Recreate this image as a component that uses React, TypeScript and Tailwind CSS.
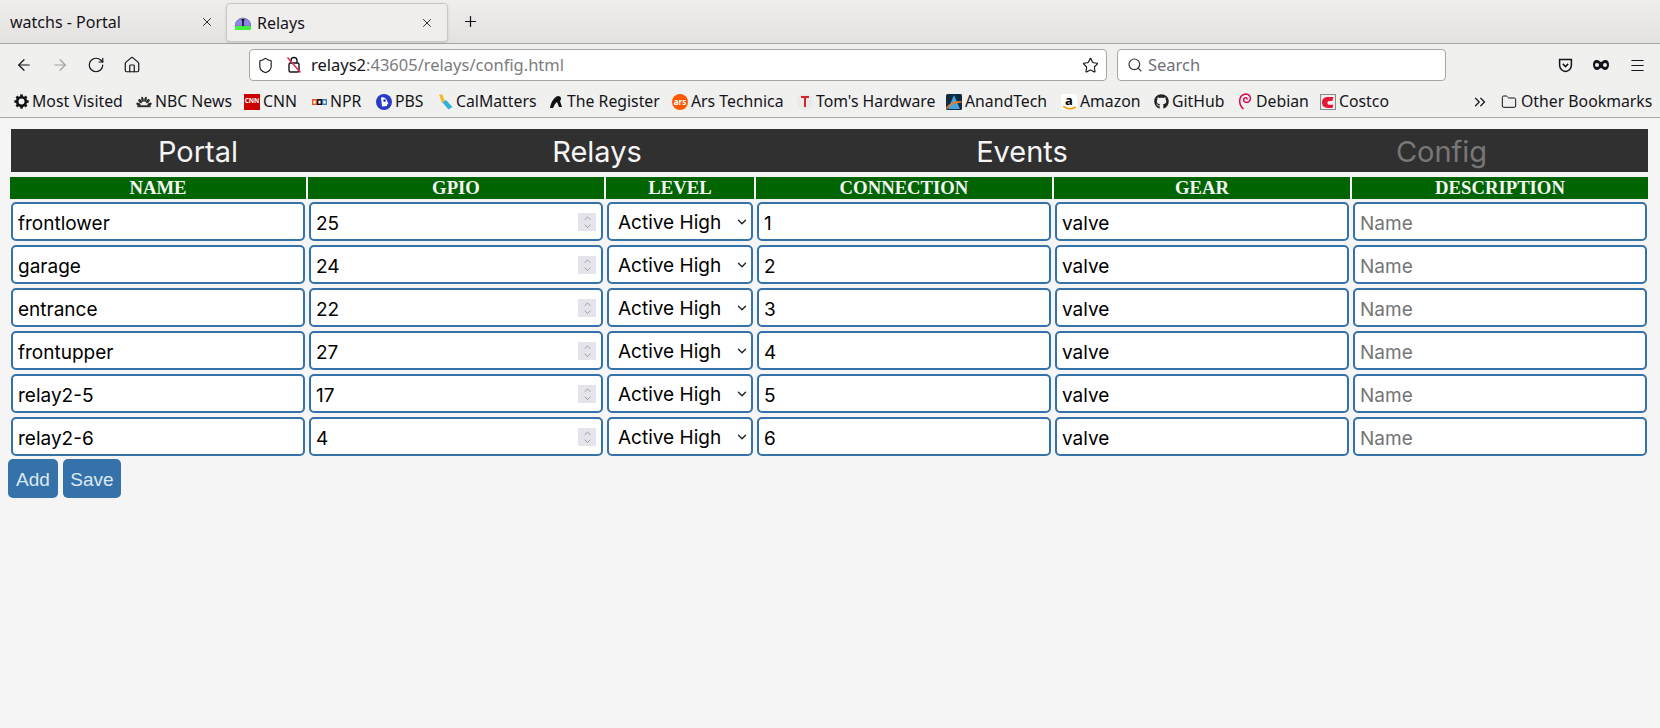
import React from 'react';
import { ArrowLeft, ArrowRight, RotateCw, Home, Shield, Star, Search, X, Plus, Menu, Folder, ChevronsRight, ChevronDown, ChevronUp } from 'lucide-react';
import { FaGithub } from 'react-icons/fa';

const relays = [
  { name: 'frontlower', gpio: '25', conn: '1' },
  { name: 'garage', gpio: '24', conn: '2' },
  { name: 'entrance', gpio: '22', conn: '3' },
  { name: 'frontupper', gpio: '27', conn: '4' },
  { name: 'relay2-5', gpio: '17', conn: '5' },
  { name: 'relay2-6', gpio: '4', conn: '6' },
];

const headers = ['NAME', 'GPIO', 'LEVEL', 'CONNECTION', 'GEAR', 'DESCRIPTION'];

const RelayFavicon = () => (
  <svg width="16" height="16" viewBox="0 0 16 16">
    <path d="M0 11 A8 8 0 0 1 16 11 Z" fill="#8a86ee" stroke="#555" strokeWidth="0.5" />
    <rect y="11" width="16" height="4" fill="#44ee44" />
    <path d="M6.5 4 H9.5 V5.5 H8.8 V11 H7.2 V5.5 H6.5 Z" fill="#111" />
  </svg>
);

const gearTeeth = [0, 45, 90, 135, 180, 225, 270, 315];

const bookmarks: { name: string; icon: React.ReactNode; w: string }[] = [
  { name: 'Most Visited', w: 'w-[123px]', icon: (
    <svg width="15" height="15" viewBox="0 0 16 16">
      <circle cx="8" cy="8" r="4.6" fill="none" stroke="#111" strokeWidth="2.8" />
      {gearTeeth.map((a) => (
        <rect key={a} x="6.6" y="0.4" width="2.8" height="3" fill="#111" transform={`rotate(${a} 8 8)`} />
      ))}
    </svg>
  ) },
  { name: 'NBC News', w: 'w-[108px]', icon: (
    <svg width="17" height="12" viewBox="0 0 17 12" fill="#2a2a2a">
      <ellipse cx="2.6" cy="8.4" rx="2.4" ry="1.5" transform="rotate(25 2.6 8.4)" />
      <ellipse cx="4.4" cy="5" rx="1.5" ry="2.6" transform="rotate(-40 4.4 5)" />
      <ellipse cx="6.9" cy="3.2" rx="1.3" ry="2.9" transform="rotate(-14 6.9 3.2)" />
      <ellipse cx="10.1" cy="3.2" rx="1.3" ry="2.9" transform="rotate(14 10.1 3.2)" />
      <ellipse cx="12.6" cy="5" rx="1.5" ry="2.6" transform="rotate(40 12.6 5)" />
      <ellipse cx="14.4" cy="8.4" rx="2.4" ry="1.5" transform="rotate(-25 14.4 8.4)" />
      <rect x="1.5" y="9.5" width="14" height="2" />
    </svg>
  ) },
  { name: 'CNN', w: 'w-[67px]', icon: (
    <div className="w-[16px] h-[16px] bg-[#cc0000] text-white text-[6.5px] font-bold flex items-center justify-center leading-none">CNN</div>
  ) },
  { name: 'NPR', w: 'w-[65px]', icon: (
    <svg width="15" height="6" viewBox="0 0 15 6">
      <rect width="5" height="6" fill="#e8541f" />
      <rect x="5" width="5" height="6" fill="#111" />
      <rect x="10" width="5" height="6" fill="#3a7fc1" />
      <rect x="1.4" y="1.6" width="2.2" height="3" fill="#fff" />
      <rect x="6.4" y="1.6" width="2.2" height="3" fill="#fff" />
      <rect x="11.4" y="1.6" width="2.2" height="3" fill="#fff" />
    </svg>
  ) },
  { name: 'PBS', w: 'w-[61px]', icon: (
    <svg width="16" height="16" viewBox="0 0 16 16">
      <circle cx="8" cy="8" r="8" fill="#2a3bc8" />
      <path d="M5 3.5 A5 5 0 0 1 11.5 8 L12.5 10 L11 10.5 V12 L6 12.5 Z" fill="#fff" />
      <circle cx="8.6" cy="6.6" r="1.3" fill="#2a3bc8" />
    </svg>
  ) },
  { name: 'CalMatters', w: 'w-[111px]', icon: (
    <svg width="15" height="16" viewBox="0 0 15 16"><path d="M1 0.5 L4.5 0.5 L7 8 L4 9 Z" fill="#f4b82e" /><path d="M4.5 8.5 L8 6 L14.5 13 L10.5 15.5 Z" fill="#2fb3d6" /></svg>
  ) },
  { name: 'The Register', w: 'w-[124px]', icon: (
    <svg width="14" height="14" viewBox="0 0 14 14"><path d="M1 13 C2 7 5 2 9 1 C12 1 13 4 11 6 L13 12 L10 12 L8 7 L6 9 L4 13 Z" fill="#111" /></svg>
  ) },
  { name: 'Ars Technica', w: 'w-[125px]', icon: (
    <div className="w-[16px] h-[16px] rounded-full bg-[#ff5a00] text-white text-[8px] font-bold flex items-center justify-center leading-none">ars</div>
  ) },
  { name: "Tom's Hardware", w: 'w-[149px]', icon: (
    <div className="w-[16px] h-[16px] rounded-full bg-[#e9e9e9] flex items-center justify-center">
      <svg width="8" height="11" viewBox="0 0 8 11"><path d="M0 0 H8 V2 H5 V11 H3 V2 H0 Z" fill="#d6202a" /></svg>
    </div>
  ) },
  { name: 'AnandTech', w: 'w-[115px]', icon: (
    <svg width="16" height="16" viewBox="0 0 16 16"><rect width="16" height="16" rx="1.5" fill="#0d2c44" /><path d="M8 1 L14 15 H2 Z" fill="#4ba3d9" /><path d="M0.5 14.5 Q6 7 15.5 8" stroke="#ee7b22" strokeWidth="1.6" fill="none" /></svg>
  ) },
  { name: 'Amazon', w: 'w-[92px]', icon: (
    <div className="w-[16px] h-[16px] bg-white rounded-[2px] flex flex-col items-center leading-none">
      <span className="text-[13px] font-bold text-black leading-[12px]">a</span>
      <svg width="13" height="4" viewBox="0 0 13 4"><path d="M0 0 Q6 5 13 1" stroke="#f90" strokeWidth="1.6" fill="none" /></svg>
    </div>
  ) },
  { name: 'GitHub', w: 'w-[84px]', icon: <FaGithub size={15} className="text-[#222]" /> },
  { name: 'Debian', w: 'w-[83px]', icon: (
    <svg width="14" height="17" viewBox="0 0 14 17"><path d="M5.5 16 C0.5 12 0 3 6.5 1.2 C12 0.5 14 5.5 11 8.6 C8.5 10.5 5 9 5.8 6 C6.6 4 9.2 4.4 9.2 6.4" stroke="#d70751" strokeWidth="1.5" fill="none" /></svg>
  ) },
  { name: 'Costco', w: 'w-[70px]', icon: (
    <div className="w-[16px] h-[16px] bg-[#eeeeee] border border-[#888] flex items-center justify-center">
      <svg width="12" height="12" viewBox="0 0 11 11"><path d="M10.5 1 H5.5 C2 1 0 3 0 6 C0 9 2 11 5.5 11 H9.5 L10.5 8 H6.5 C4.5 8 4.5 4.5 6.5 4.5 H9.5 Z" fill="#e31837" /></svg>
    </div>
  ) },
];

const inputCls = "w-full h-[39px] bg-white border-2 border-[#3572a9] rounded-[5px] px-[5px] pt-[3px] text-[19px] text-black outline-none placeholder:text-[#757575] font-['Inter',sans-serif]";

const Spinner = () => (
  <div className="absolute right-[8px] top-[11px] w-[18px] h-[18px] bg-[#e4e4ea] flex flex-col items-center justify-center text-[#77777d]">
    <ChevronUp size={13} strokeWidth={1.5} className="-mb-[3px]" />
    <ChevronDown size={13} strokeWidth={1.5} />
  </div>
);

const LockCrossed = () => (
  <svg width="16" height="18" viewBox="0 0 16 18" fill="none" className="ml-[12px]">
    <path d="M5 7 V4.5 A3 3 0 0 1 11 4.5 V7" stroke="#15141a" strokeWidth="1.4" />
    <rect x="3" y="7" width="10" height="9" rx="1.5" stroke="#15141a" strokeWidth="1.4" />
    <path d="M1.5 1.5 L14.5 16.5" stroke="#e22850" strokeWidth="1.5" />
  </svg>
);

const App = () => {
  return (
    <div className="w-[1660px] h-[728px] flex flex-col overflow-hidden bg-[#f5f5f5] font-['Noto_Sans',sans-serif]">
      {/* Tab strip */}
      <div className="h-[44px] bg-gradient-to-b from-[#efeeec] to-[#e3e2e0] border-b border-[#a8a6a2] flex items-start">
        <div className="w-[226px] h-[43px] pl-[10px] pr-[12px] flex items-center justify-between text-[16px] text-[#15141a]">
          <span>watchs - Portal</span>
          <X size={14} strokeWidth={1.5} />
        </div>
        <div className="mt-[3px] w-[222px] h-[39px] bg-[#efeeec] rounded-[4px] border border-[#c9c8c5] shadow-sm pl-[8px] pr-[13px] flex items-center justify-between text-[16px] text-[#15141a]">
          <div className="flex items-center gap-[6px]"><RelayFavicon /><span>Relays</span></div>
          <X size={14} strokeWidth={1.5} />
        </div>
        <div className="ml-[14px] h-[43px] flex items-center text-[#15141a]"><Plus size={17} strokeWidth={1.75} /></div>
      </div>

      {/* Toolbar */}
      <div className="h-[42px] bg-[#f0f0ee] flex items-center text-[#15141a]">
        <div className="w-[249px] pl-[15px] flex items-center gap-[18px] shrink-0">
          <ArrowLeft size={18} strokeWidth={1.6} />
          <ArrowRight size={18} strokeWidth={1.6} className="text-[#a3a2a0]" />
          <RotateCw size={18} strokeWidth={1.6} />
          <Home size={18} strokeWidth={1.6} />
        </div>
        <div className="w-[858px] h-[32px] bg-white border border-[#a8a6a2] rounded-[4px] flex items-center pl-[7px] pr-[7px] shrink-0">
          <Shield size={17} strokeWidth={1.6} />
          <LockCrossed />
          <span className="ml-[9px] text-[16.5px]">relays2<span className="text-[#7c7c80]">:43605/relays/config.html</span></span>
          <Star size={17} strokeWidth={1.6} className="ml-auto" />
        </div>
        <div className="ml-[10px] w-[329px] h-[32px] bg-white border border-[#a8a6a2] rounded-[4px] flex items-center pl-[9px] shrink-0 text-[16.5px] text-[#70707a]">
          <Search size={16} strokeWidth={1.75} className="text-[#333]" />
          <span className="ml-[5px]">Search</span>
        </div>
        <div className="ml-[112px] flex items-center gap-[20px]">
          <svg width="15" height="15" viewBox="0 0 14 14" fill="none" stroke="#15141a" strokeWidth="1.4"><path d="M1.5 1.5 H12.5 V6.5 C12.5 10 10 12.5 7 12.5 C4 12.5 1.5 10 1.5 6.5 Z" /><path d="M4.5 5.5 L7 8 L9.5 5.5" /></svg>
          <svg width="16" height="10" viewBox="0 0 16 10"><path d="M4 0 C6 0 7 2 8 2 C9 2 10 0 12 0 C15 0 16 2 16 5 C16 8 14 10 12 10 C10 10 9 8 8 8 C7 8 6 10 4 10 C2 10 0 8 0 5 C0 2 1 0 4 0 Z M4 3 A2 2 0 1 0 4 7 A2 2 0 1 0 4 3 Z M12 3 A2 2 0 1 0 12 7 A2 2 0 1 0 12 3 Z" fill="#15141a" fillRule="evenodd" /></svg>
          <Menu size={17} strokeWidth={1.6} />
        </div>
      </div>

      {/* Bookmarks toolbar */}
      <div className="h-[32px] bg-[#f0f0ee] border-b border-[#a8a6a2] flex items-center pl-[13px] text-[15.8px] text-[#15141a] whitespace-nowrap">
        {bookmarks.map((b) => (
          <div key={b.name} className={`${b.w} flex items-center gap-[3px] shrink-0`}>
            <div className="w-[16px] flex justify-center shrink-0">{b.icon}</div>
            <span>{b.name}</span>
          </div>
        ))}
        <ChevronsRight size={18} strokeWidth={1.6} className="ml-[81px]" />
        <div className="ml-[12px] flex items-center gap-[4px]">
          <Folder size={16} strokeWidth={1.5} />
          <span>Other Bookmarks</span>
        </div>
      </div>

      {/* Page */}
      <div className="flex-1 pt-[11px] pl-[8px]">
        <div className="ml-[3px] w-[1637px] h-[43px] bg-[#303030] grid grid-cols-[374px_424px_426px_413px] text-[29px] font-['Inter',sans-serif] font-normal text-[#f5f5f5] text-center leading-[46px]">
          <a>Portal</a>
          <a>Relays</a>
          <a>Events</a>
          <a className="text-[#777777]">Config</a>
        </div>

        <div className="ml-[2px] mt-[5px] w-[1640px] grid grid-cols-[296px_296px_148px_296px_296px_296px] gap-x-[2px] gap-y-[4px]">
          {headers.map((h) => (
            <div key={h} className="h-[22px] -mb-px bg-[#006400] text-[#f5f5f5] text-center text-[18.7px] font-bold leading-[22px] font-['Liberation_Serif',serif]">{h}</div>
          ))}
          {relays.map((r) => (
            <React.Fragment key={r.name}>
              <div className="px-px"><input className={inputCls} defaultValue={r.name} /></div>
              <div className="px-px relative">
                <input className={inputCls} defaultValue={r.gpio} />
                <Spinner />
              </div>
              <div className="px-px relative">
                <div className={`${inputCls} flex items-center pl-[9px]`}>Active High</div>
                <ChevronDown size={14} strokeWidth={2.4} className="absolute right-[5px] top-[13px] text-[#222]" />
              </div>
              <div className="px-px"><input className={inputCls} defaultValue={r.conn} /></div>
              <div className="px-px"><input className={inputCls} defaultValue="valve" /></div>
              <div className="px-px"><input className={inputCls} placeholder="Name" /></div>
            </React.Fragment>
          ))}
        </div>

        <div className="mt-[3px] flex gap-[5px] font-['Liberation_Sans',sans-serif]">
          <button className="w-[50px] h-[39px] pt-[3px] bg-[#3572a9] rounded-[5px] text-[19px] text-[#dce8f2]">Add</button>
          <button className="w-[58px] h-[39px] pt-[3px] bg-[#3572a9] rounded-[5px] text-[19px] text-[#dce8f2]">Save</button>
        </div>
      </div>
    </div>
  );
};

export default App;
